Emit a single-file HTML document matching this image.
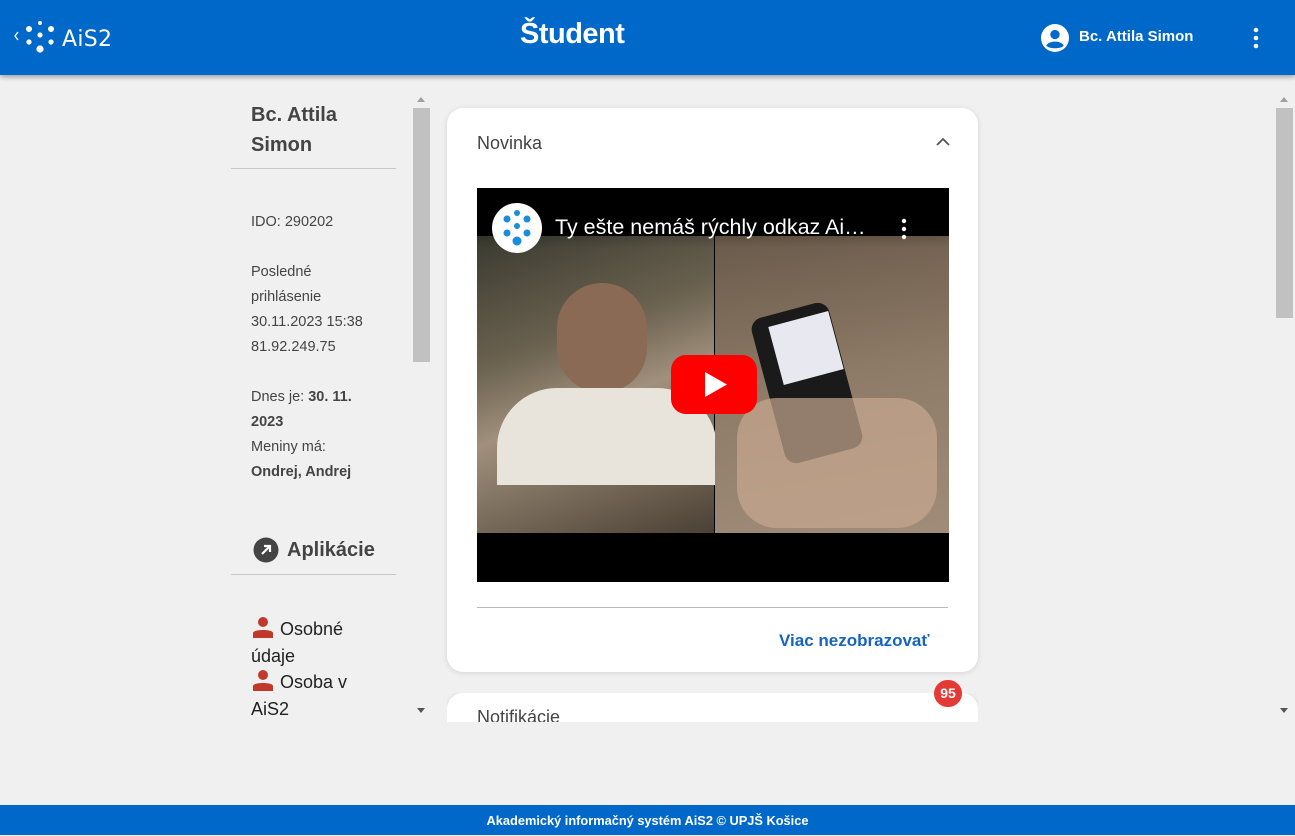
<!DOCTYPE html>
<html><head><meta charset="utf-8"><style>
*{box-sizing:border-box;margin:0;padding:0}
body{width:1295px;height:835px;background:#f0f0f0;font-family:"Liberation Sans",Roboto,sans-serif;position:relative;overflow:hidden;color:#333}
.hdr{position:absolute;left:0;top:0;width:1295px;height:75px;background:#0068c8;box-shadow:0 2px 5px rgba(0,0,0,.35);z-index:5}
.foot{position:absolute;left:0;top:805px;width:1295px;height:30px;background:#0068c8;color:#fff;font-size:12.8px;font-weight:bold;text-align:center;line-height:31px}
.abs{position:absolute}
.lp{position:absolute;left:231px;top:90px;width:165px;height:632px;overflow:hidden}
.card{position:absolute;left:447px;width:531px;background:#fff;border-radius:16px;box-shadow:0 1px 6px rgba(0,0,0,.12)}
.sb{position:absolute;background:#c1c1c1}
.arr{position:absolute;width:0;height:0;border-left:4px solid transparent;border-right:4px solid transparent}
</style></head><body>
<div class="hdr">
 <svg class="abs" style="left:12px;top:20px" width="110" height="36" viewBox="0 0 110 36">
  <path d="M6 12 L3 16 L6 20" stroke="#fff" stroke-width="1.3" fill="none"/>
  <circle cx="28" cy="3" r="2" fill="#fff"/><circle cx="17" cy="9" r="3" fill="#fff"/><circle cx="39" cy="9" r="3" fill="#fff"/>
  <circle cx="28" cy="15" r="2.6" fill="#fff"/><circle cx="17" cy="22" r="2.6" fill="#fff"/><circle cx="39" cy="22" r="2.6" fill="#fff"/>
  <circle cx="28" cy="29" r="3.6" fill="#fff"/>
  <text x="50" y="26" fill="#fff" font-size="22" font-family="DejaVu Sans" textLength="50">AiS2</text>
 </svg>
 <div class="abs" style="left:520px;top:18px;color:#fff;font-size:29px;font-weight:bold;letter-spacing:-0.5px">Študent</div>
 <svg class="abs" style="left:1041px;top:24px" width="28" height="28" viewBox="0 0 24 24"><circle cx="12" cy="12" r="12" fill="#fff"/><circle cx="12" cy="9" r="4" fill="#0068c8"/><path d="M4.5 18.5 C7 14 17 14 19.5 18.5 C17 21.5 7 21.5 4.5 18.5Z" fill="#0068c8"/></svg>
 <div class="abs" style="left:1079px;top:28px;color:#fff;font-size:15px;font-weight:bold">Bc. Attila Simon</div>
 <svg class="abs" style="left:1252px;top:26px" width="8" height="24"><circle cx="4" cy="4" r="2.3" fill="#fff"/><circle cx="4" cy="12" r="2.3" fill="#fff"/><circle cx="4" cy="20" r="2.3" fill="#fff"/></svg>
</div>

<div class="lp">
 <div style="padding:10px 20px 0;font-size:20px;font-weight:bold;line-height:30px;color:#444">Bc. Attila<br>Simon</div>
 <div style="border-top:1px solid #c8c8c8;margin-top:8px"></div>
 <div style="padding:0 20px;font-size:14.5px;line-height:25px;color:#444">
  <div style="margin-top:41px">IDO: 290202</div>
  <div style="margin-top:25px">Posledné<br>prihlásenie<br>30.11.2023 15:38<br>81.92.249.75</div>
  <div style="margin-top:25px">Dnes je: <b>30. 11.<br>2023</b><br>Meniny má:<br><b>Ondrej, Andrej</b></div>
 </div>
 <div style="margin-top:52px;padding-left:22px;font-size:20px;font-weight:bold;color:#444;display:flex;align-items:center">
  <svg width="26" height="26" viewBox="0 0 26 26" style="margin-right:8px"><circle cx="13" cy="13" r="12.5" fill="#444"/><path d="M9 17 L17 9 M11 9 H17 V15" stroke="#fff" stroke-width="2.2" fill="none"/></svg>Aplikácie</div>
 <div style="border-top:1px solid #c8c8c8;margin-top:11px"></div>
 <div style="padding:41px 20px 0;font-size:18px;line-height:26.5px;color:#222">
  <div><svg width="24" height="22" viewBox="0 0 24 22" style="vertical-align:-3px"><circle cx="12" cy="6" r="5" fill="#c0392b"/><path d="M2 22 V17 C2 13 22 13 22 17 V22Z" fill="#c0392b"/></svg> Osobné<br>údaje</div>
  <div><svg width="24" height="22" viewBox="0 0 24 22" style="vertical-align:-3px"><circle cx="12" cy="6" r="5" fill="#c0392b"/><path d="M2 22 V17 C2 13 22 13 22 17 V22Z" fill="#c0392b"/></svg> Osoba v<br>AiS2</div>
 </div>
</div>
<div class="sb" style="left:413px;top:108px;width:17px;height:254px"></div>
<div class="arr" style="left:417px;top:97px;border-bottom:5px solid #a0a0a0"></div>
<div class="arr" style="left:417px;top:708px;border-top:5px solid #555"></div>
<div class="sb" style="left:1276px;top:108px;width:17px;height:210px"></div>
<div class="arr" style="left:1280px;top:97px;border-bottom:5px solid #a0a0a0"></div>
<div class="arr" style="left:1280px;top:708px;border-top:5px solid #555"></div>

<div class="card" style="top:108px;height:564px">
 <div class="abs" style="left:30px;top:25px;font-size:18px;color:#444">Novinka</div>
 <svg class="abs" style="left:488px;top:28px" width="16" height="12"><path d="M2 9 L8 3 L14 9" stroke="#555" stroke-width="1.8" fill="none"/></svg>
 <div class="abs" style="left:30px;top:80px;width:472px;height:394px;background:#000;overflow:hidden">
  <div class="abs" style="left:0;top:48px;width:237px;height:297px;background:linear-gradient(160deg,#3a3a30 0%,#6b6250 35%,#a0907c 55%,#4a4034 100%)"></div>
  <div class="abs" style="left:80px;top:95px;width:90px;height:110px;border-radius:45px;background:#8a6a55"></div>
  <div class="abs" style="left:20px;top:200px;width:220px;height:97px;border-radius:60px 60px 0 0;background:#e8e4dc"></div>
  <div class="abs" style="left:238px;top:48px;width:234px;height:297px;background:linear-gradient(170deg,#6a5a4a,#8f7c68 50%,#a08c78)"></div>
  <div class="abs" style="left:290px;top:120px;width:80px;height:150px;border-radius:12px;background:#1a1a1a;transform:rotate(-15deg)"></div>
  <div class="abs" style="left:298px;top:130px;width:62px;height:60px;background:#e8e8f0;transform:rotate(-15deg)"></div>
  <div class="abs" style="left:260px;top:210px;width:200px;height:130px;border-radius:40px;background:#c8a890;opacity:.7"></div>
  <div class="abs" style="left:0;top:0;width:472px;height:60px;background:linear-gradient(#000a,#0000)"></div>
  <svg class="abs" style="left:15px;top:15px" width="50" height="50"><circle cx="25" cy="25" r="25" fill="#fff"/><g fill="#1a8cdc"><circle cx="25" cy="10" r="3"/><circle cx="15" cy="16" r="3.5"/><circle cx="35" cy="16" r="3.5"/><circle cx="25" cy="23" r="3"/><circle cx="15" cy="30" r="3.5"/><circle cx="35" cy="30" r="3.5"/><circle cx="25" cy="38" r="4.5"/></g></svg>
  <div class="abs" style="left:78px;top:27px;color:#fff;font-size:21.5px">Ty ešte nemáš rýchly odkaz Ai…</div>
  <svg class="abs" style="left:423px;top:30px" width="8" height="22"><circle cx="4" cy="3" r="2.2" fill="#fff"/><circle cx="4" cy="11" r="2.2" fill="#fff"/><circle cx="4" cy="19" r="2.2" fill="#fff"/></svg>
  <svg class="abs" style="left:194px;top:167px" width="86" height="59"><rect width="86" height="59" rx="15" fill="#f00"/><path d="M34 17 L56 29.5 L34 42Z" fill="#fff"/></svg>
 </div>
 <div class="abs" style="left:30px;top:499px;width:471px;border-top:1px solid #bbb"></div>
 <div class="abs" style="left:332px;top:523px;color:#1565c0;font-size:17px;font-weight:bold">Viac nezobrazovať</div>
</div>
<div style="position:absolute;left:447px;top:693px;width:531px;height:29px;overflow:hidden">
 <div style="background:#fff;border-radius:16px;height:80px;box-shadow:0 1px 6px rgba(0,0,0,.12)"><div style="padding:14px 30px;font-size:18px;color:#444">Notifikácie</div></div>
</div>
<div class="abs" style="left:934px;top:680px;width:28px;height:27px;border-radius:14px;background:#e53935;color:#fff;font-size:14px;font-weight:bold;text-align:center;line-height:27px">95</div>
<div class="foot">Akademický informačný systém AiS2 © UPJŠ Košice</div>
</body></html>
